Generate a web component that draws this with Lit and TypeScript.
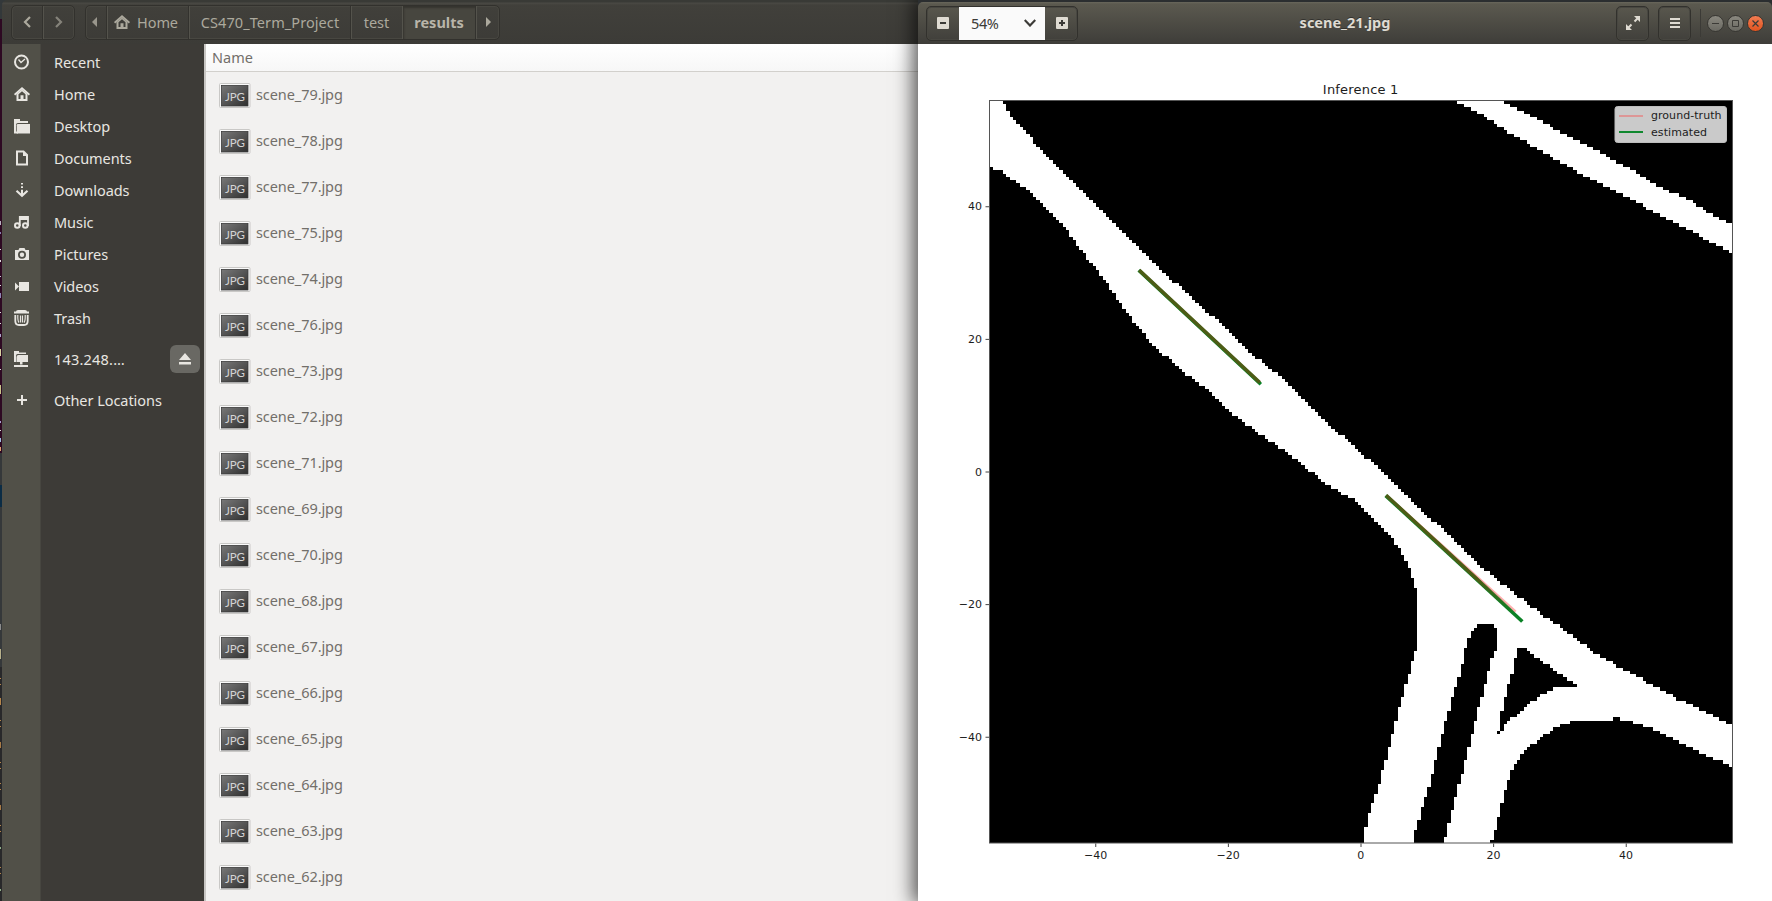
import { LitElement, html, svg, css } from "lit";
import { customElement } from "lit/decorators.js";

type Pt = [number, number];

const AXES = { left: 989.8, top: 100.6, cell: 3.3155, count: 224 };

const mainRoad: Pt[] = [
  [985, 98], [1003.3, 98], [1003.3, 101], [1006.7, 108], [1013.3, 120], [1030, 136.7], [1040, 150], [1060, 170], [1090, 198],
  [1113.3, 223.3], [1146.7, 256.7], [1186.7, 293.3], [1226.7, 329.3], [1260, 360.7], [1280, 376], [1300, 396.7],
  [1333, 427.3], [1360, 454], [1370, 459.3], [1400, 489.3], [1423, 513.3], [1446.7, 531.7], [1473.3, 560],
  [1500, 581.5], [1510, 590], [1540, 612.7], [1573, 636.7], [1593, 651.7], [1626.7, 671], [1673, 696.7], [1735, 727.5],
  [1735, 768], [1706.7, 755.5], [1673, 739.5], [1646.7, 726.5], [1630, 720.8], [1619.5, 720.8], [1619.5, 717], [1612.5, 717],
  [1612.5, 720.8], [1573, 720.8],
  [1556.7, 727.3], [1540, 738.3], [1523, 753.3], [1513, 768.3], [1506.7, 786.7], [1500, 812], [1494, 837], [1490, 841], [1489, 846],
  [1443, 846], [1493.3, 653], [1496.8, 647], [1496.8, 628], [1493, 624.4], [1477, 624.4], [1473, 630], [1467.3, 641.7],
  [1460.7, 670], [1447, 716.7], [1430.7, 780], [1414, 836.7], [1413, 846], [1363.5, 846], [1364, 833], [1384, 766.7],
  [1400.7, 703.3], [1414, 656.7], [1417.6, 646.7], [1417.6, 595], [1414, 581.7], [1407, 564], [1393, 538], [1373, 520],
  [1356.7, 502.3], [1326.7, 484], [1303, 465], [1283, 449.3], [1263, 436.7], [1243, 421.7], [1225, 407.7],
  [1208, 390], [1186.7, 374], [1153, 345], [1136.7, 325], [1123, 306.7], [1110, 286.7], [1093, 265], [1076.7, 245],
  [1067, 230], [1046.7, 210], [1023, 186.7], [1013, 180], [1003, 171.7], [985, 166],
];

const sideRoad: Pt[] = [
  [1450, 98], [1499, 98], [1503, 101], [1540, 121], [1570, 136.7], [1626.7, 166.7], [1653, 183], [1690, 201], [1711.7, 214.5],
  [1735, 225.5], [1735, 254.5], [1700, 236], [1663, 216.7], [1626.7, 197], [1593, 180], [1556.7, 160], [1530, 144.5],
  [1503, 129], [1490, 119.5], [1456, 102],
];

const island: Pt[] = [
  [1519.5, 647], [1526, 647.5], [1540, 660.5], [1553, 668.5], [1566, 679], [1577, 685], [1577, 688], [1556.7, 688],
  [1540, 696], [1523, 709], [1506.7, 723.5], [1499, 734], [1496, 733], [1500.2, 727], [1500.2, 717], [1507, 692], [1514, 665], [1517, 650],
];

const inside = (x: number, y: number, poly: Pt[]) => {
  let hit = false;
  for (let i = 0, j = poly.length - 1; i < poly.length; j = i++) {
    const [xi, yi] = poly[i];
    const [xj, yj] = poly[j];
    if (yi > y !== yj > y && x < ((xj - xi) * (y - yi)) / (yj - yi) + xi) hit = !hit;
  }
  return hit;
};

/* Occupancy grid of the drivable area, merged into horizontal runs. */
const drivableArea = () => {
  const { left, top, cell, count } = AXES;
  let d = "";
  for (let r = 0; r < count; r++) {
    let start = -1;
    for (let c = 0; c <= count; c++) {
      const x = left + (c + 0.5) * cell;
      const y = top + (r + 0.5) * cell;
      const on = c < count && (inside(x, y, sideRoad) || (inside(x, y, mainRoad) && !inside(x, y, island)));
      if (on && start < 0) start = c;
      if (!on && start >= 0) {
        const y0 = Math.round(top + r * cell);
        const y1 = Math.round(top + (r + 1) * cell);
        const x0 = Math.round(left + start * cell);
        const x1 = Math.round(left + c * cell);
        d += `M${x0} ${y0}H${x1}V${y1}H${x0}Z`;
        start = -1;
      }
    }
  }
  return d;
};

@customElement("inference-plot")
class InferencePlot extends LitElement {
  static styles = css`
    :host { display: block; width: 854px; height: 857px; background: #fff; }
    svg { display: block; }
    text { font-family: "DejaVu Sans", sans-serif; font-size: 11px; fill: #1c1c1c; }
    .title { font-size: 13px; }
    .end { text-anchor: end; }
    .mid { text-anchor: middle; }
  `;
  render() {
    const ticks = [-40, -20, 0, 20, 40];
    const label = (v: number) => (v < 0 ? "\u2212" + -v : String(v));
    return html`<svg width="854" height="857" viewBox="918 44 854 857">
      <defs>
        <linearGradient id="fade" gradientUnits="userSpaceOnUse" x1="1386" y1="496" x2="1515" y2="614">
          <stop offset="0.7" stop-color="#4d5c16" /><stop offset="1" stop-color="#4d5c16" stop-opacity="0" />
        </linearGradient>
      </defs>
      <text class="title mid" x="1360.6" y="94" textLength="75.5">Inference 1</text>
      <rect x="990" y="101" width="742" height="742" fill="#000" />
      <path d=${drivableArea()} fill="#fff" shape-rendering="crispEdges" />
      <rect x="989.5" y="100.5" width="743" height="742.5" fill="none" stroke="#555" />
      <path d="M1140 271.500L1259.5 383" stroke="#0a8226" stroke-width="3.600" stroke-linecap="square" />
      <path d="M1140.500 271.300L1258.500 381.400" stroke="#4d5c16" stroke-width="3.500" stroke-linecap="square" />
      <path d="M1387.500 497L1514 610.800" stroke="#ffb0b0" stroke-width="3.600" stroke-linecap="square" />
      <path d="M1387 496.800L1521 620.300" stroke="#0a8226" stroke-width="3.600" stroke-linecap="square" />
      <path d="M1387.500 496.500L1515 614" stroke="url(#fade)" stroke-width="3.500" stroke-linecap="square" />
      ${ticks.map((v) => svg`
        <path d="M${1361 + v * 6.631} 843.500v3.500M989 ${472 - v * 6.631}h-3.500" stroke="#444" />
        <text class="mid" x=${1360.8 + v * 6.631} y="859">${label(v)}</text>
        <text class="end" x="982" y=${475.7 - v * 6.631}>${label(v)}</text>`)}
      <rect x="1615" y="106.500" width="111.500" height="36" rx="2.500" fill="#cacaca" stroke="#bdbdbd" />
      <path d="M1619 116h24" stroke="#dd9696" stroke-width="2" />
      <path d="M1619 132h24" stroke="#10882f" stroke-width="2" />
      <text x="1651" y="119" textLength="70.500">ground-truth</text>
      <text x="1651" y="135.600" textLength="56">estimated</text>
    </svg>`;
  }
}

const glyphs: Record<string, unknown> = {
  recent: svg`<circle cx="7.500" cy="8" r="6.500" fill="none" stroke="currentColor" stroke-width="2"/><path d="M4.500 5.500L7 8.500L11 5" fill="none" stroke="currentColor" stroke-width="1.300"/>`,
  home: svg`<path d="M0.500 8.700L8 2.300L15.500 8.700" fill="none" stroke="currentColor" stroke-width="1.900"/><path fill-rule="evenodd" d="M2.500 8L8 3.500L13.500 8V15H2.500ZM4.500 8.200V13H6.500V9.300H9.500V13H11.500V8.200L8 5.300Z" fill="currentColor"/>`,
  folder: svg`<path d="M0 1H6V3H14V5H4Q2 5 2 7V14.700H0Z" fill="currentColor"/><path d="M4 6H16V15.500H2.700V7.300Q2.700 6 4 6Z" fill="currentColor"/><path d="M0 13.500H4V15.500H0Z" fill="currentColor"/>`,
  document: svg`<path d="M3 1.500H9.500L13 5V14.500H3Z" fill="none" stroke="currentColor" stroke-width="2"/><path d="M9 1V6H14Z" fill="currentColor"/>`,
  download: svg`<path d="M7 1h2v1.500H7zM7 4.300h2v1.700H7zM7 7.700h2v5H7z" fill="currentColor"/><path d="M2.500 8.800L8 13.700L13.500 8.800" fill="none" stroke="currentColor" stroke-width="2.200"/>`,
  music: svg`<circle cx="3.300" cy="11.500" r="2.300" fill="none" stroke="currentColor" stroke-width="2"/><circle cx="11.300" cy="11.500" r="2.300" fill="none" stroke="currentColor" stroke-width="2"/><path d="M5.800 12V3H14V12M6 5h8" fill="none" stroke="currentColor" stroke-width="1.800"/>`,
  camera: svg`<path fill-rule="evenodd" d="M1 4H4.500L5.500 2H10.500L11.500 4H15V14H1ZM8 4.800A4 4 0 1 0 8 12.800A4 4 0 1 0 8 4.800Z" fill="currentColor"/><circle cx="8" cy="8.800" r="2.200" fill="currentColor"/>`,
  video: svg`<path d="M5 4H15V13H5ZM1 4.500L5 8.500L1 12.500Z" fill="currentColor"/>`,
  trash: svg`<path d="M2 1.500Q2 0 4 0H11Q13 0 13 1.500H15V3.500H0V1.500Z" fill="currentColor"/><path d="M1.300 5V11Q1.300 15 5 15H10Q13.700 15 13.700 11V5" fill="none" stroke="currentColor" stroke-width="1.800"/><path d="M3.800 5Q3.600 11 5 12.500M6.500 5.500V12.500M8.500 5.500V12.500M11.200 5Q11.400 11 10 12.500" fill="none" stroke="currentColor" stroke-width="1.200"/>`,
  server: svg`<path d="M0 0H5V1.500H12V3H3.500Q2 3 2 5V11H0Z" fill="currentColor"/><path d="M4.500 4H14V11H2.500V6Q2.500 4 4.500 4Z" fill="currentColor"/><path d="M6 11H8.500V13.500H6ZM0 14H14V16H0Z" fill="currentColor"/>`,
  plus: svg`<path d="M3 8H13M8 3V13" stroke="currentColor" stroke-width="2"/>`,
};

const icon = (name: string) => html`<svg class="icon" width="16" height="16" viewBox="0 0 16 16">${glyphs[name]}</svg>`;

const fileIcon = html`<svg class="thumb" width="32" height="26" viewBox="0 0 32 26">
  <defs><linearGradient id="g" x1="0" y1="0" x2="1" y2="1"><stop offset="0" stop-color="#787878"/><stop offset="0.5" stop-color="#555"/><stop offset="1" stop-color="#2e2e2e"/></linearGradient></defs>
  <rect x="0.500" y="0.500" width="30.500" height="24" rx="1" fill="#fafafa" stroke="#c9c8c6"/>
  <rect x="2.500" y="2.500" width="26.500" height="20.500" fill="url(#g)" stroke="#3a3a3a" stroke-width="0.800"/>
  <text x="6" y="17.500" class="jpg" textLength="20">JPG</text>
</svg>`;

@customElement("app-root")
class AppRoot extends LitElement {
  static styles = css`
    :host { display: block; width: 1772px; height: 901px; overflow: hidden; font-family: "Noto Sans", "Open Sans", sans-serif; font-size: 14.500px; background: #2d0922; }
    * { box-sizing: border-box; }
    svg { display: block; flex: none; }
    .desk { display: grid; grid-template-columns: 2px 916px 854px; height: 901px; }
    .files { display: flex; flex-direction: column; background: #33383a; }
    .bar { height: 44px; padding: 5px 9px 4px; display: flex; gap: 10px; color: #aca99d; background: linear-gradient(#393a36 0, #393a36 2px, #4a4944 3px, #41403b 5px, #3c3b37); border-radius: 5px 0 0 0; }
    .group { display: flex; height: 35px; border: 1px solid #32312d; border-radius: 5px; box-shadow: inset 0 0 0 1px #484741; }
    .nav { width: 64px; }
    .seg { display: flex; align-items: center; justify-content: center; border-left: 1px solid #54534c; box-shadow: -1px 0 0 #33322e; padding-bottom: 1.500px; }
    .seg:first-child { border-left: 0; box-shadow: none; }
    .half { flex: 1; }
    .s1 { width: 21px; padding-right: 4px; }
    .s2 { width: 82px; gap: 7px; padding-right: 5px; letter-spacing: -0.100px; }
    .s3 { width: 162px; padding-right: 1px; letter-spacing: 0.080px; }
    .s4 { width: 51px; padding-right: 1px; }
    .s5 { width: 74px; font-weight: 700; padding-right: 1px; background: #47463f; box-shadow: inset 1px 2px 2px #35342f; color: #b9b5a9; }
    .s6 { width: 23px; }
    .body { flex: 1; display: flex; min-height: 0; }
    .side { width: 202px; padding-top: 2px; color: #e8e6e1; background: linear-gradient(90deg, #515048 0, #515048 38px, #474640 38px, #474640 39px, #3d3b37 39px); letter-spacing: -0.050px; }
    .place { display: flex; height: 32px; align-items: center; padding-left: 12px; gap: 24px; }
    .server { height: 50px; }
    .server span { letter-spacing: 0.200px; }
    .place span { flex: 1; }
    .eject { width: 30px; height: 28px; border-radius: 6px; background: #696863; display: flex; align-items: center; justify-content: center; margin-right: 4px; }
    .list { flex: 1; border-left: 2px solid #c8c6c3; background: #f2f1f0; color: #726f6a; }
    .head { height: 28px; border-bottom: 1px solid #d2d0cc; background: linear-gradient(#fff, #f7f7f7); padding-left: 6px; line-height: 27px; }
    .row { display: flex; height: 46px; align-items: center; padding-left: 13px; gap: 5px; letter-spacing: -0.080px; }
    .row span { padding-bottom: 3px; }
    .thumb { margin-top: 2px; }
    .jpg { font-family: "Lato", sans-serif; font-size: 11.500px; fill: #d4d4d4; letter-spacing: 0; }
    .viewer { background: #2b2e30; padding-top: 2px; box-shadow: -2px 0 18px 3px rgba(0, 0, 0, 0.65); z-index: 1; }
    .vbar { display: flex; height: 42px; align-items: center; padding: 0 8px; color: #dfdbd2; border-radius: 5px 5px 0 0; background: linear-gradient(#69675c 0, #5b594f 2px, #3e3d39); }
    .zoom { width: 152px; }
    .zb { width: 32px; display: flex; align-items: center; justify-content: center; flex: none; padding-right: 1px; }
    .zb:last-child { padding: 0 0 0 1px; }
    .zv { width: 86px; flex: none; background: #fafafa; color: #3c3b37; display: flex; align-items: center; justify-content: space-between; padding: 0 9px 1px 12px; letter-spacing: -0.400px; }
    .title { flex: 1; text-align: center; font-weight: 700; padding: 0 4px 2px 0; text-shadow: 0 -1px 0 #33322e; }
    .tool { width: 33px; align-items: center; justify-content: center; margin-right: 9px; }
    .sep { width: 1px; height: 28px; background: #3b3a36; margin-right: 6px; }
    .dots { display: flex; gap: 3px; }
    .dot { width: 17px; height: 17px; border-radius: 50%; background: linear-gradient(#8a887f, #6a6962); border: 1px solid #373632; color: #3c3b37; display: flex; align-items: center; justify-content: center; }
    .close { background: linear-gradient(#f27c52, #e2541f); }
  `;

  private files = [79, 78, 77, 75, 74, 76, 73, 72, 71, 69, 70, 68, 67, 66, 65, 64, 63, 62];
  private places: [string, string][] = [
    ["recent", "Recent"], ["home", "Home"], ["folder", "Desktop"], ["document", "Documents"], ["download", "Downloads"],
    ["music", "Music"], ["camera", "Pictures"], ["video", "Videos"], ["trash", "Trash"],
  ];

  private backdrop() {
    const marks: [number, number, string][] = [
      [221, 4, "#b9b0c0"], [232, 2, "#8a7fae"], [249, 1, "#ddd"], [260, 2, "#ddd"], [276, 1, "#c9c9d9"], [285, 1, "#ddd"],
      [293, 5, "#8f86b5"], [312, 1, "#ddd"], [323, 1, "#ddd"], [334, 3, "#aca3c9"], [349, 7, "#d8d3a0"], [369, 1, "#ddd"],
      [385, 9, "#c9c489"], [421, 2, "#a9a0d0"], [430, 1, "#ddd"], [438, 4, "#9fbfe0"], [447, 4, "#e0a070"],
      [624, 6, "#8c8c8c"], [649, 10, "#b7b08a"], [678, 1, "#b5854a"], [684, 1, "#b5854a"], [698, 7, "#b5854a"],
      [720, 1, "#b5854a"], [726, 1, "#b5854a"], [742, 6, "#a87a45"], [762, 1, "#b5854a"], [768, 1, "#b5854a"],
      [783, 1, "#b5854a"], [789, 1, "#b5854a"], [805, 5, "#a87a45"], [825, 1, "#b5854a"], [831, 1, "#b5854a"],
      [847, 2, "#8fae88"], [867, 1, "#b5854a"], [873, 1, "#b5854a"], [889, 2, "#8fae88"],
    ];
    return html`<svg width="2" height="901" shape-rendering="crispEdges">
      <rect width="2" height="19" fill="#33383a"/><rect y="19" width="2" height="434" fill="#2d0922"/>
      <rect y="453" width="2" height="214" fill="#35383a"/><rect y="485" width="2" height="22" fill="#0b2c45"/>
      <rect y="667" width="2" height="234" fill="#28282a"/>
      ${marks.map(([y, h, c]) => svg`<rect y=${y} width="1" height=${h} fill=${c}/>`)}
    </svg>`;
  }

  render() {
    return html`<div class="desk">
      ${this.backdrop()}
      <section class="files">
        <header class="bar">
          <div class="group nav">
            <div class="seg half"><svg width="8" height="12" viewBox="0 0 8 12"><path d="M7 1L2 6L7 11" fill="none" stroke="currentColor" stroke-width="2.200"/></svg></div>
            <div class="seg half"><svg width="8" height="12" viewBox="0 0 8 12"><path d="M1 1L6 6L1 11" fill="none" stroke="#85837a" stroke-width="2.200"/></svg></div>
          </div>
          <div class="group">
            <div class="seg s1"><svg width="5" height="10"><path d="M5 0V10L0 5Z" fill="#99968c"/></svg></div>
            <div class="seg s2">${icon("home")}<span>Home</span></div>
            <div class="seg s3">CS470_Term_Project</div>
            <div class="seg s4">test</div>
            <div class="seg s5">results</div>
            <div class="seg s6"><svg width="5" height="10"><path d="M0 0V10L5 5Z" fill="#aca99d"/></svg></div>
          </div>
        </header>
        <div class="body">
          <nav class="side">
            ${this.places.map(([i, t]) => html`<div class="place">${icon(i)}<span>${t}</span></div>`)}
            <div class="place server">${icon("server")}<span>143.248.…</span>
              <div class="eject"><svg width="12" height="12"><path d="M6 0L12 7H0ZM0 9H12V11.500H0Z" fill="currentColor"/></svg></div></div>
            <div class="place">${icon("plus")}<span>Other Locations</span></div>
          </nav>
          <main class="list">
            <div class="head">Name</div>
            ${this.files.map((n) => html`<div class="row">${fileIcon}<span>scene_${n}.jpg</span></div>`)}
          </main>
        </div>
      </section>
      <section class="viewer">
        <header class="vbar">
          <div class="group zoom">
            <div class="zb"><svg width="12" height="12"><rect width="12" height="12" rx="1" fill="#dfdbd2"/><path d="M3 6h6" stroke="#3c3b37" stroke-width="2"/></svg></div>
            <div class="zv"><span>54%</span><svg width="12" height="8"><path d="M0.700 1L6 6.500L11.300 1" fill="none" stroke="#3c3b37" stroke-width="2.200"/></svg></div>
            <div class="zb"><svg width="12" height="12"><rect width="12" height="12" rx="1" fill="#dfdbd2"/><path d="M3 6h6M6 3v6" stroke="#3c3b37" stroke-width="2"/></svg></div>
          </div>
          <div class="title">scene_21.jpg</div>
          <div class="group tool"><svg width="14" height="14"><path d="M8 0h6v6zM0 8v6h6z" fill="#dfdbd2"/><path d="M8.500 5.500L12 2M5.500 8.500L2 12" stroke="#dfdbd2" stroke-width="2"/></svg></div>
          <div class="group tool"><svg width="10" height="10"><path d="M0 1h10M0 5h10M0 9h10" stroke="#dfdbd2" stroke-width="2"/></svg></div>
          <div class="sep"></div>
          <div class="dots">
            <div class="dot"><svg width="9" height="9"><path d="M1 4.500h7" stroke="currentColor"/></svg></div>
            <div class="dot"><svg width="9" height="9"><path d="M1.500 1.500h6v6h-6z" fill="none" stroke="currentColor"/></svg></div>
            <div class="dot close"><svg width="9" height="9"><path d="M1.500 1.500l6 6M7.500 1.500l-6 6" stroke="currentColor" stroke-width="1.200"/></svg></div>
          </div>
        </header>
        <inference-plot></inference-plot>
      </section>
    </div>`;
  }
}
